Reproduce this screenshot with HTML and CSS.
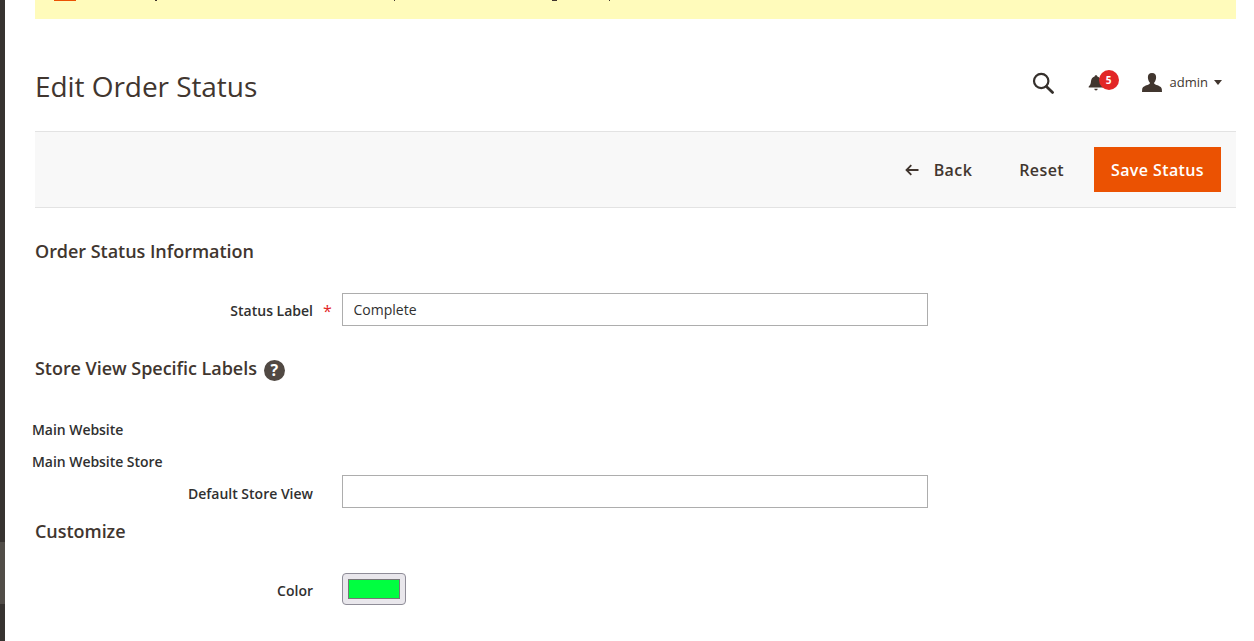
FILE: index.html
```html
<!DOCTYPE html>
<html lang="en">
<head>
<meta charset="utf-8">
<title>Edit Order Status</title>
<link rel="stylesheet" href="styles.css">
</head>
<body>
<div class="shell">
  <nav class="rail" aria-hidden="true">
    <div class="rail-top"></div>
    <div class="rail-active"></div>
    <div class="rail-bottom"></div>
  </nav>
  <main class="main">
    <div class="notice">
      <span class="notice-icon"></span>
      <span class="speck speck-a"></span>
      <span class="speck speck-b"></span>
      <span class="speck speck-c"></span>
      <span class="speck speck-d"></span>
    </div>
    <header class="page-header">
      <h1 class="page-title">Edit Order Status</h1>
      <div class="actions-top">
        <svg class="icon-search" viewBox="0 0 24 24" width="24" height="24"><circle cx="10.2" cy="10" r="7.2" fill="none" stroke="#35302c" stroke-width="2.2"/><path d="M15.4 15.4 21.6 21.4" stroke="#35302c" stroke-width="2.8" stroke-linecap="round"/></svg>
        <div class="notify">
          <svg class="icon-bell" viewBox="0 0 16 18" width="16" height="18"><path fill="#41362f" d="M8 1.2c-.8 0-1.300.5-1.400 1.200C4.300 3 3.200 4.900 3 7.300c-.2 2.500-.9 4.200-2.300 5.300v1h14.600v-1c-1.400-1.100-2.100-2.800-2.300-5.300-.2-2.400-1.300-4.300-3.600-4.900C9.300 1.700 8.800 1.200 8 1.200zM6.300 14.700a1.700 1.700 0 0 0 3.400 0z"/></svg>
          <span class="badge">5</span>
        </div>
        <div class="user">
          <svg class="icon-user" viewBox="0 0 20 19" width="20" height="19"><path fill="#41362f" d="M10 0c-2.900 0-4.300 2-4.100 4.700.1 1.800.8 3.500 1.700 4.500.4.500.3 1.400-.2 1.800C5.600 12.400.6 12.900.2 15.900L0 19h20l-.2-3.100c-.4-3-5.400-3.500-7.200-4.900-.5-.4-.6-1.300-.2-1.800.9-1 1.600-2.700 1.700-4.500C14.300 2 12.900 0 10 0z"/></svg>
          <span class="user-name">admin</span>
          <span class="caret"></span>
        </div>
      </div>
    </header>
    <div class="toolbar">
      <button class="btn btn-back" type="button">
        <svg viewBox="0 0 14 12" width="14" height="12"><path d="M13.500 6H1.800M6.300 1.200 1.500 6l4.800 4.800" fill="none" stroke="#41362f" stroke-width="1.800"/></svg>
        <span>Back</span>
      </button>
      <button class="btn btn-reset" type="button">Reset</button>
      <button class="btn btn-primary" type="button">Save Status</button>
    </div>
    <form class="form">
      <h2 class="section-title section-info">Order Status Information</h2>
      <div class="field">
        <label class="field-label" for="status-label">Status Label</label>
        <span class="required">*</span>
        <input class="text-input" id="status-label" type="text" value="Complete">
      </div>
      <h2 class="section-title section-store">Store View Specific Labels
        <span class="help">?</span>
      </h2>
      <div class="scope scope-site">Main Website</div>
      <div class="scope scope-store">Main Website Store</div>
      <div class="field field-view">
        <label class="field-label" for="view-label">Default Store View</label>
        <span class="required"></span>
        <input class="text-input" id="view-label" type="text">
      </div>
      <h2 class="section-title section-custom">Customize</h2>
      <div class="field field-color">
        <label class="field-label" for="color">Color</label>
        <span class="required"></span>
        <input class="color-input" id="color" type="color" value="#00ff40">
      </div>
    </form>
  </main>
</div>
</body>
</html>
```
FILE: styles.css
```css
* { box-sizing: border-box; }
html, body { margin: 0; height: 100%; overflow: hidden; background: #fff; }
body { font-family: "Open Sans", sans-serif; color: #41362f; }
.shell { display: flex; height: 641px; }
.rail { width: 5px; flex: none; display: flex; flex-direction: column; }
.rail-top { height: 542px; background: #373330; }
.rail-active { height: 62px; background: #514d48; }
.rail-bottom { flex: 1; background: #373330; }
.main { width: 1201px; margin-left: 30px; flex: none; }

.notice { height: 19px; background: #fffbbb; padding-left: 19px; display: flex; align-items: flex-start; }
.notice-icon { width: 22px; height: 1px; background: #eb5202; }
.speck { width: 2px; height: 1px; background: #41362f; }
.speck-a { margin-left: 79px; }
.speck-b { margin-left: 237px; width: 1px; }
.speck-c { margin-left: 157px; width: 5px; }
.speck-d { margin-left: 52px; width: 1px; }

.page-header { height: 112px; display: flex; justify-content: space-between; padding-top: 47px; }
.page-title { margin: 0; font-size: 28px; font-weight: 400; line-height: 40px; color: #41362f; letter-spacing: -.06px; }
.actions-top { display: flex; align-items: flex-start; padding-right: 14px; padding-top: 1px; }
.icon-search { margin-top: 4px; }
.notify { position: relative; margin-left: 33px; margin-top: 7px; width: 16px; height: 18px; }
.badge {
  position: absolute; left: 11px; top: -4px; width: 20px; height: 20px; border-radius: 50%;
  background: #e22626; color: #fff; font-size: 10px; font-weight: 700; line-height: 20px; text-align: center;
}
.user { display: flex; align-items: center; margin-left: 38px; height: 19px; margin-top: 6px; }
.user-name { font-size: 13px; margin-left: 8px; line-height: 19px; }
.caret { margin-left: 6px; border: 4px solid transparent; border-top: 5px solid #41362f; border-bottom: 0; }

.toolbar {
  height: 77px; background: #f8f8f8; border-top: 1px solid #e3e3e3; border-bottom: 1px solid #e3e3e3;
  display: flex; align-items: center; justify-content: flex-end; padding-right: 15px;
}
.btn { border: 0; background: none; font: 600 16px "Open Sans", sans-serif; letter-spacing: .4px; color: #41362f; height: 45px; padding: 0; }
.btn-back { display: flex; align-items: center; gap: 15px; margin-right: 47px; }
.btn-reset { margin-right: 30px; }
.btn-primary { width: 127px; background: #eb5202; color: #fff; }

.form { display: block; }
.section-title { margin: 0; font-size: 18px; font-weight: 600; line-height: 24px; color: #41362f; letter-spacing: -.04px; }
.section-info { padding-top: 31px; height: 85px; }
.field { display: flex; align-items: center; height: 33px; }
.field-label { width: 278px; padding-top: 2px; text-align: right; font-size: 14px; font-weight: 600; color: #303030; }
.required { width: 29px; text-align: center; color: #e22626; font-size: 16px; font-weight: 400; line-height: 20px; padding-top: 3px; }
.text-input {
  width: 586px; height: 33px; border: 1px solid #adadad; padding: 0 10.500px;
  font: 400 14px "Open Sans", sans-serif; color: #303030; background: #fff; outline: 0; border-radius: 0;
}
.section-store { display: flex; align-items: flex-start; gap: 7px; padding-top: 30px; height: 94px; }
.help {
  width: 21px; height: 21px; border-radius: 50%; background: #514943; color: #fff; margin-top: 4px;
  font-size: 16px; font-weight: 700; line-height: 21px; text-align: center;
}
.scope { margin-left: -3px; font-size: 14px; font-weight: 600; color: #303030; height: 32px; line-height: 20px; letter-spacing: -.05px; }
.field-view { margin-top: -9px; }
.field-view .field-label { padding-top: 4px; }
.section-custom { padding-top: 11px; height: 65px; }
.field-color { height: 32px; }
.color-input {
  width: 64px; height: 32px; padding: 5px; border: 1px solid #8f8d98; border-radius: 4px;
  background: #e9e7ec; appearance: none; -webkit-appearance: none;
}
.color-input::-webkit-color-swatch-wrapper { padding: 0; }
.color-input::-webkit-color-swatch { border: 1px solid #767676; }
```
